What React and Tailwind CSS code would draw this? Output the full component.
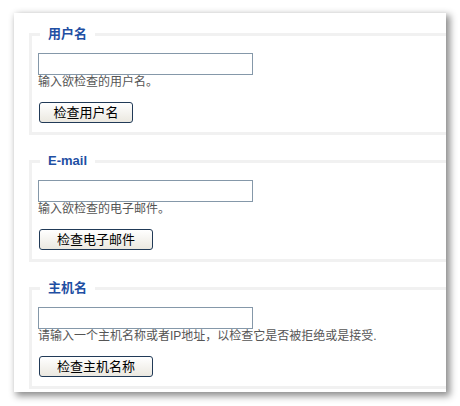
import React from "react";

const FONT = { fontFamily: '"Liberation Sans", "Noto Sans CJK SC", sans-serif' };

function Section({ legend, hint, button, btnW }) {
  return (
    <div className="relative border-[3px] border-r-0 border-[#f1f1f1] pl-[6px] pt-[17px] pb-[8px]">
      <span className="absolute -top-[10px] left-[8px] bg-white px-[8px] text-[13px] leading-[16px] font-bold text-[#1f4fa3]">
        {legend}
      </span>
      <div className="h-[22px] w-[215px] border border-[#8598a9] bg-white"></div>
      <div className="text-[12px] leading-[14px] text-[#555]">{hint}</div>
      <button
        className={`mt-[13px] ml-[1px] h-[21px] ${btnW} rounded-[3px] border border-[#213a57] bg-gradient-to-b from-white to-[#ebe8e0] text-[13px] leading-[19px] text-black`}
      >
        {button}
      </button>
    </div>
  );
}

export default function App() {
  return (
    <div className="w-[460px] h-[406px] bg-white pt-[13px] pl-[14px]" style={FONT}>
      <div className="w-[432px] h-[379px] overflow-hidden bg-white pl-[15px] pt-[20px] pb-[6px] shadow-[3px_3px_7px_1px_rgba(0,0,0,0.45)] flex flex-col gap-[25px]">
        <Section legend="用户名" hint="输入欲检查的用户名。" button="检查用户名" btnW="w-[94px]" />
        <Section legend="E-mail" hint="输入欲检查的电子邮件。" button="检查电子邮件" btnW="w-[114px]" />
        <Section
          legend="主机名"
          hint="请输入一个主机名称或者IP地址，以检查它是否被拒绝或是接受."
          button="检查主机名称"
          btnW="w-[114px]"
        />
      </div>
    </div>
  );
}
